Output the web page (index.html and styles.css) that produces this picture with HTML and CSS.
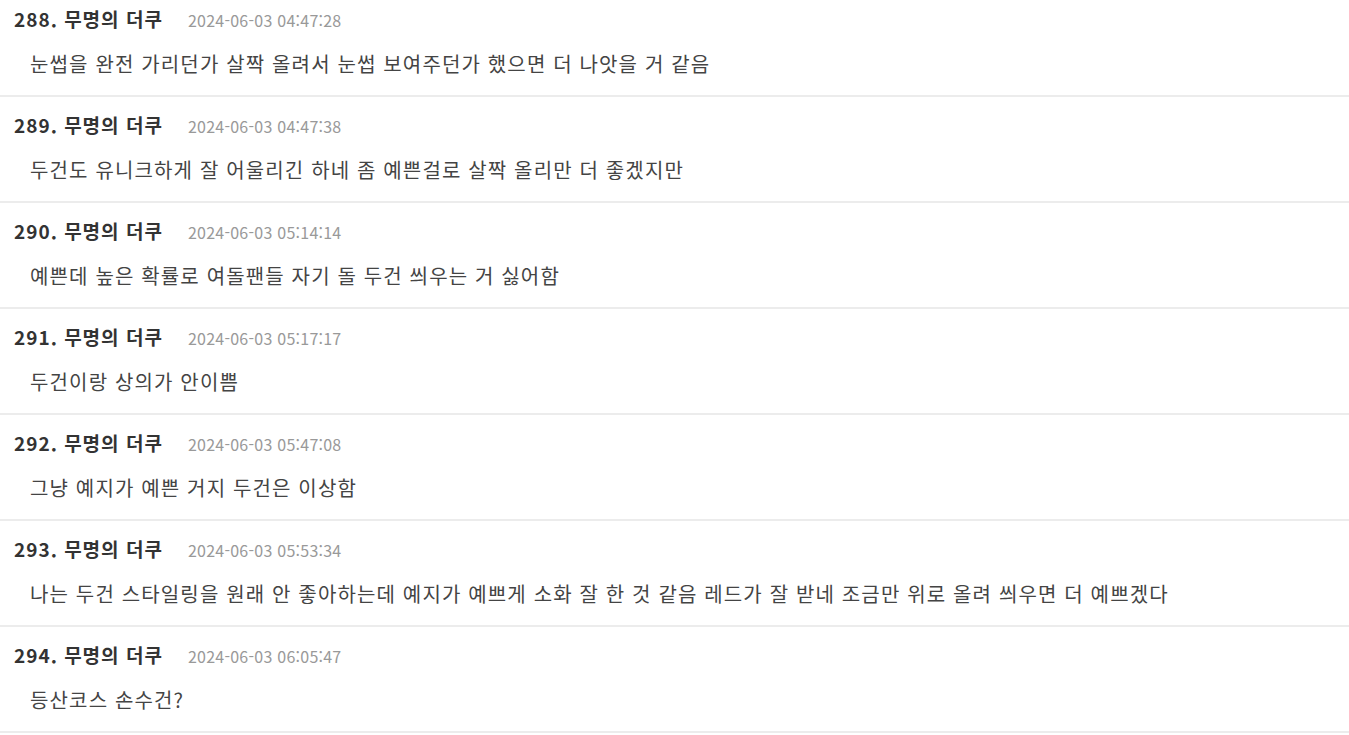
FILE: index.html
```html
<!DOCTYPE html>
<html lang="ko">
<head>
<meta charset="utf-8">
<title>댓글</title>
<link rel="stylesheet" href="styles.css">
</head>
<body>
<ul class="comments">
  <li class="comment">
    <div class="meta"><span class="author">288. 무명의 더쿠</span><span class="date">2024-06-03 04:47:28</span></div>
    <p class="text">눈썹을 완전 가리던가 살짝 올려서 눈썹 보여주던가 했으면 더 나앗을 거 같음</p>
  </li>
  <li class="comment">
    <div class="meta"><span class="author">289. 무명의 더쿠</span><span class="date">2024-06-03 04:47:38</span></div>
    <p class="text">두건도 유니크하게 잘 어울리긴 하네 좀 예쁜걸로 살짝 올리만 더 좋겠지만</p>
  </li>
  <li class="comment">
    <div class="meta"><span class="author">290. 무명의 더쿠</span><span class="date">2024-06-03 05:14:14</span></div>
    <p class="text">예쁜데 높은 확률로 여돌팬들 자기 돌 두건 씌우는 거 싫어함</p>
  </li>
  <li class="comment">
    <div class="meta"><span class="author">291. 무명의 더쿠</span><span class="date">2024-06-03 05:17:17</span></div>
    <p class="text">두건이랑 상의가 안이쁨</p>
  </li>
  <li class="comment">
    <div class="meta"><span class="author">292. 무명의 더쿠</span><span class="date">2024-06-03 05:47:08</span></div>
    <p class="text">그냥 예지가 예쁜 거지 두건은 이상함</p>
  </li>
  <li class="comment">
    <div class="meta"><span class="author">293. 무명의 더쿠</span><span class="date">2024-06-03 05:53:34</span></div>
    <p class="text">나는 두건 스타일링을 원래 안 좋아하는데 예지가 예쁘게 소화 잘 한 것 같음 레드가 잘 받네 조금만 위로 올려 씌우면 더 예쁘겠다</p>
  </li>
  <li class="comment">
    <div class="meta"><span class="author">294. 무명의 더쿠</span><span class="date">2024-06-03 06:05:47</span></div>
    <p class="text">등산코스 손수건?</p>
  </li>
</ul>
</body>
</html>
```

FILE: styles.css
```css
html, body {
  margin: 0;
  padding: 0;
  background: #fff;
}
body {
  font-family: "Noto Sans CJK KR", "Noto Sans", sans-serif;
  color: #333;
  overflow: hidden;
}
.comments {
  list-style: none;
  margin: -9px 0 0 0;
  padding: 0;
}
.comment {
  padding: 16px 14px 17px;
  border-bottom: 2px solid #ececec;
}
.meta {
  display: flex;
  align-items: baseline;
  gap: 25px;
  height: 24px;
  line-height: 24px;
}
.author {
  font-size: 19px;
  font-weight: 700;
  letter-spacing: 1px;
  color: #333;
}
.date {
  font-size: 16px;
  letter-spacing: 0.25px;
  color: #999;
}
.text {
  margin: 19px 0 0 16px;
  font-size: 20px;
  line-height: 28px;
  letter-spacing: 1.15px;
  color: #444;
}
```
